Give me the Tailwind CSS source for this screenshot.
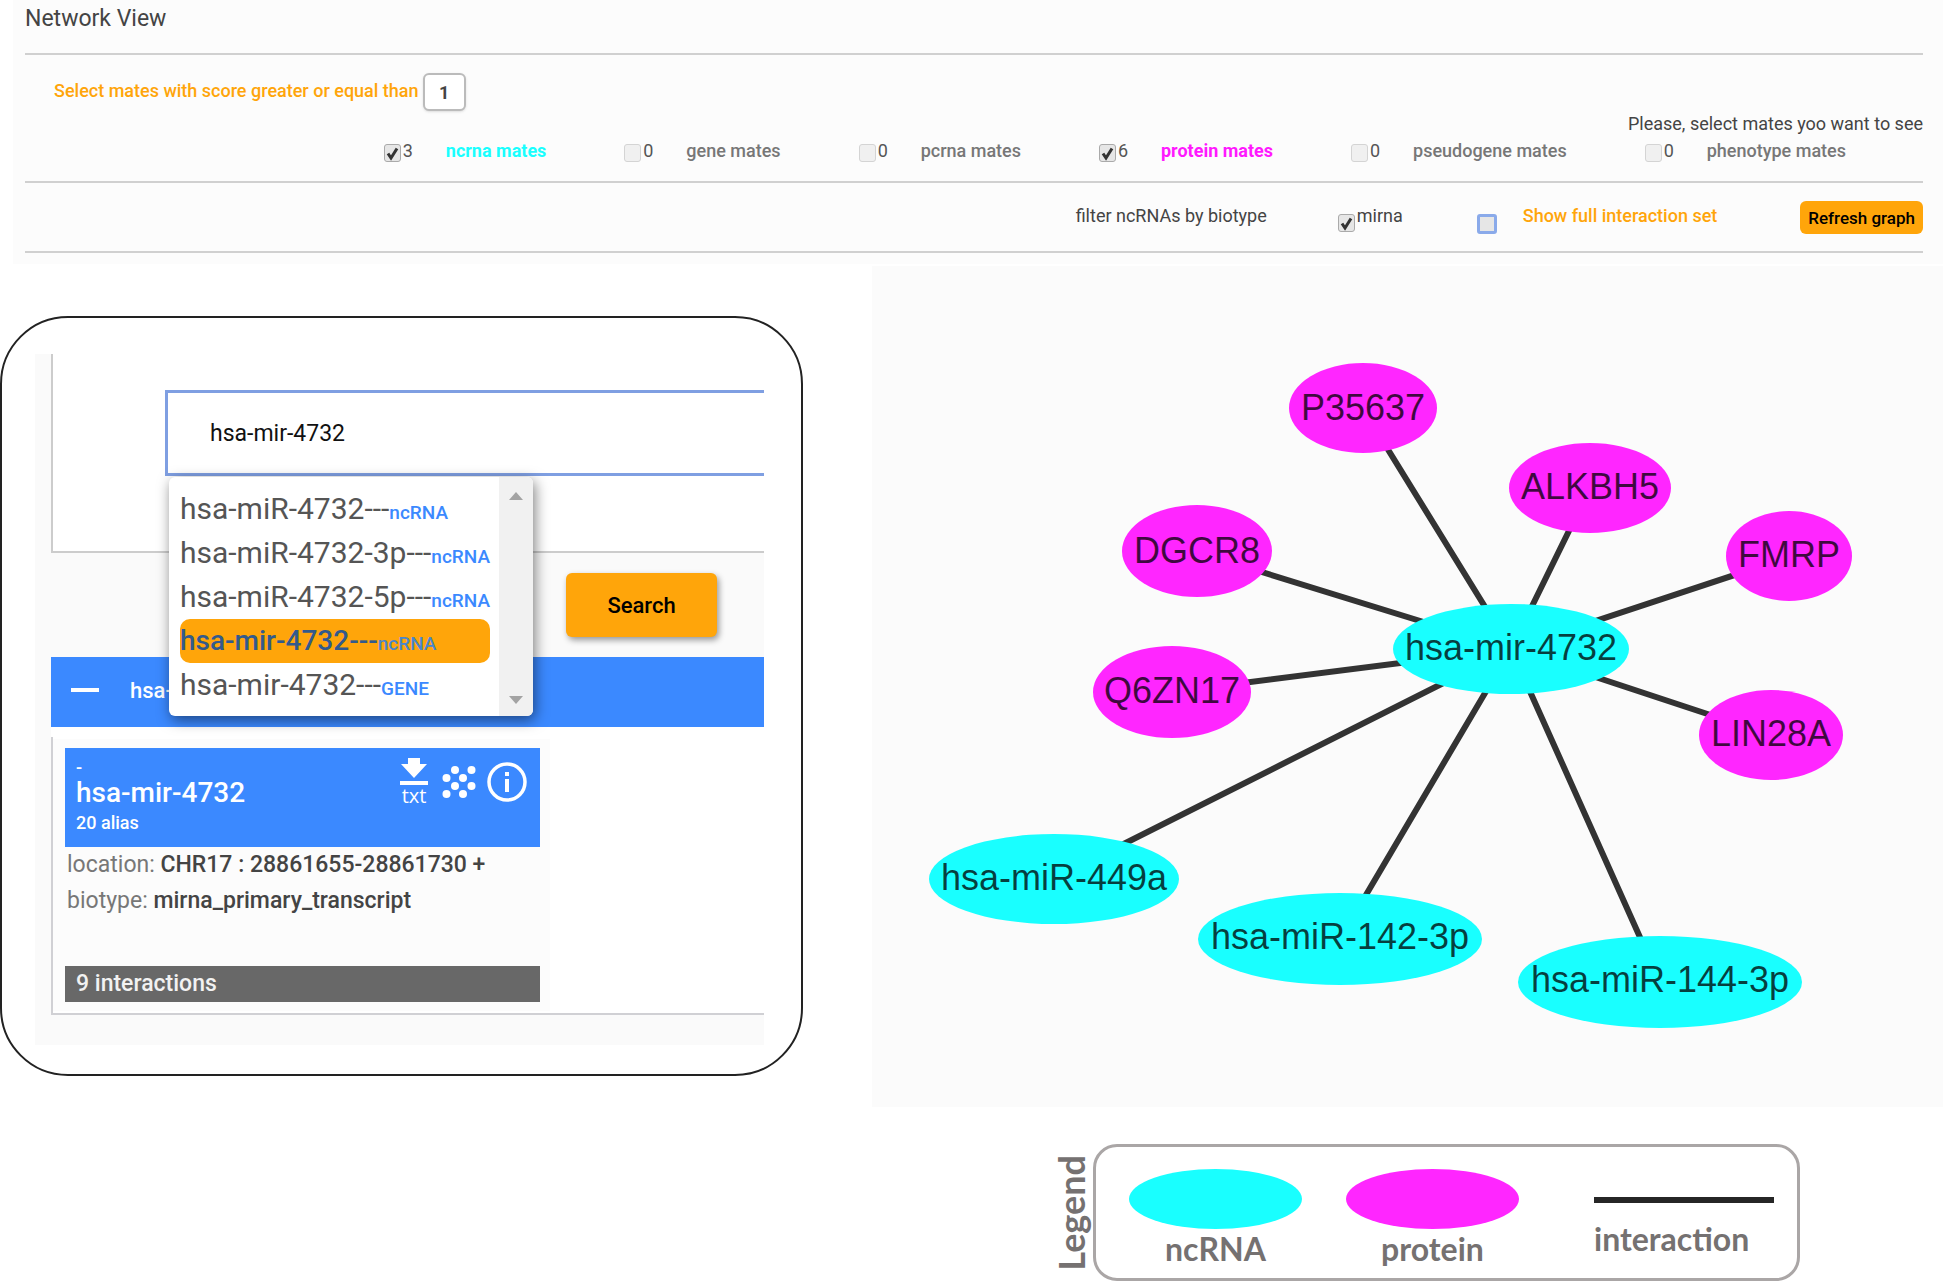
<!DOCTYPE html>
<html lang="en">
<head>
<meta charset="utf-8">
<title>Network View</title>
<script src="https://cdn.jsdelivr.net/npm/@tailwindcss/browser@4"></script>
</head>
<body class="bg-white font-['Roboto',sans-serif] text-[#444]">

<header class="ml-[13px] bg-[#fcfcfc] pl-3 pr-5 pb-[11px] text-lg leading-6">
  <h1 class="border-b-2 border-[#d0d0d0] pt-px pb-4 text-[23px] leading-9">Network View</h1>

  <form class="border-b-2 border-[#d0d0d0] pt-[18px] pb-[18px]">
    <div class="flex items-center gap-1 pb-px pl-[29px]">
      <label for="score" class="pb-[3px] font-medium text-[#ffa50a]">Select mates with score greater or equal than</label>
      <input id="score" type="text" value="1" class="h-[38px] w-[43px] rounded-md border-2 border-[#bbb] bg-white text-center font-bold shadow-sm">
    </div>
    <p class="text-right">Please, select mates yoo want to see</p>
    <div class="mt-[3px] flex items-start justify-end gap-[78px] pr-[77px] text-[#777]">
      <label class="flex items-start">
        <span class="mt-[5px] grid"><input type="checkbox" checked class="col-start-1 row-start-1 h-[18px] w-[17px] appearance-none rounded-[3px] border border-[#aaa] bg-[#e6e6e6]"><svg class="pointer-events-none col-start-1 row-start-1 h-[18px] w-[17px]" viewBox="0 0 17 18"><path d="M4 9.500l3 4.500 6-9.500" fill="none" stroke="#333" stroke-width="3"/></svg></span>
        <span class="ml-0.5 w-[43px] text-[#555]">3</span><span class="font-bold text-[#19ffff]">ncrna mates</span>
      </label>
      <label class="flex items-start">
        <input type="checkbox" class="mt-[5px] h-[18px] w-[17px] appearance-none rounded-[3px] border border-[#d4d4d4] bg-[#f0f0f0]">
        <span class="ml-0.5 w-[43px] text-[#555]">0</span><span class="font-medium">gene mates</span>
      </label>
      <label class="flex items-start">
        <input type="checkbox" class="mt-[5px] h-[18px] w-[17px] appearance-none rounded-[3px] border border-[#d4d4d4] bg-[#f0f0f0]">
        <span class="ml-0.5 w-[43px] text-[#555]">0</span><span class="font-medium">pcrna mates</span>
      </label>
      <label class="flex items-start">
        <span class="mt-[5px] grid"><input type="checkbox" checked class="col-start-1 row-start-1 h-[18px] w-[17px] appearance-none rounded-[3px] border border-[#aaa] bg-[#e6e6e6]"><svg class="pointer-events-none col-start-1 row-start-1 h-[18px] w-[17px]" viewBox="0 0 17 18"><path d="M4 9.500l3 4.500 6-9.500" fill="none" stroke="#333" stroke-width="3"/></svg></span>
        <span class="ml-0.5 w-[43px] text-[#555]">6</span><span class="font-bold text-[#ff19ff]">protein mates</span>
      </label>
      <label class="flex items-start">
        <input type="checkbox" class="mt-[5px] h-[18px] w-[17px] appearance-none rounded-[3px] border border-[#d4d4d4] bg-[#f0f0f0]">
        <span class="ml-0.5 w-[43px] text-[#555]">0</span><span class="font-medium">pseudogene mates</span>
      </label>
      <label class="flex items-start">
        <input type="checkbox" class="mt-[5px] h-[18px] w-[17px] appearance-none rounded-[3px] border border-[#d4d4d4] bg-[#f0f0f0]">
        <span class="ml-0.5 w-[43px] text-[#555]">0</span><span class="font-medium">phenotype mates</span>
      </label>
    </div>
  </form>

  <form class="flex items-start justify-end border-b-2 border-[#d0d0d0] pt-[18px] pb-[17px]">
    <p class="mt-[3px] mr-[71px]">filter ncRNAs by biotype</p>
    <label class="mt-[3px] mr-[74px] flex items-start">
      <span class="mt-2.5 grid"><input type="checkbox" checked class="col-start-1 row-start-1 h-[18px] w-[17px] appearance-none rounded-[3px] border border-[#aaa] bg-[#e6e6e6]"><svg class="pointer-events-none col-start-1 row-start-1 h-[18px] w-[17px]" viewBox="0 0 17 18"><path d="M4 9.500l3 4.500 6-9.500" fill="none" stroke="#333" stroke-width="3"/></svg></span>
      <span class="ml-0.5">mirna</span>
    </label>
    <label class="mt-[3px] mr-[83px] flex items-start gap-[26px]">
      <input type="checkbox" class="mt-2.5 h-5 w-5 appearance-none rounded-[3px] border-[3px] border-[#8aaaea] bg-[#e6e6e6]">
      <span class="font-medium text-[#ffa50a]">Show full interaction set</span>
    </label>
    <button type="button" class="h-[33px] rounded-md bg-[#ffa50a] px-2 text-[17px] font-medium text-black">Refresh graph</button>
  </form>
</header>

<main class="grid grid-cols-[803fr_69px_1071fr] items-start">
  <section class="mt-[52px] rounded-[68px] border-2 border-[#222] pt-9 pr-[37px] pb-[29px] pl-[33px]">
    <div class="bg-[#fafafa] pb-[30px] pl-4">
      <div class="border-b-2 border-l-2 border-[#ccc] bg-white pt-9 pb-[75px] pl-28">
        <div class="relative">
          <input type="text" value="hsa-mir-4732" aria-label="Search" class="block h-[86px] w-full border-3 border-r-0 border-[#7f9fe2] bg-white pl-[42px] text-[23px] text-[#111]">
          <div class="absolute top-[87px] left-1 z-10 flex w-[364px] overflow-hidden rounded-md bg-white shadow-[2px_4px_14px_rgba(0,0,0,0.5)]">
            <ul role="listbox" class="w-[330px] shrink-0 pt-2.5 pr-[9px] pb-[9px] pl-[11px] text-3xl leading-11 whitespace-nowrap text-[#555]">
              <li role="option">hsa-miR-4732---<span class="text-[19px] leading-none font-medium text-[#3b89ff]">ncRNA</span></li>
              <li role="option">hsa-miR-4732-3p---<span class="text-[19px] leading-none font-medium text-[#3b89ff]">ncRNA</span></li>
              <li role="option">hsa-miR-4732-5p---<span class="text-[19px] leading-none font-medium text-[#3b89ff]">ncRNA</span></li>
              <li role="option" aria-selected="true" class="rounded-[10px] bg-[#ffa50a] text-[28px] leading-11 font-medium text-[#335a8c]">hsa-mir-4732---<span class="text-[19px] leading-none text-[#4a86cc]">ncRNA</span></li>
              <li role="option">hsa-mir-4732---<span class="text-[19px] leading-none font-medium text-[#3b89ff]">GENE</span></li>
            </ul>
            <div class="flex w-[34px] flex-col items-center justify-between bg-[#f1f1f1] pt-[15px] pb-3">
              <svg class="h-2 w-3.5" viewBox="0 0 14 8"><path d="M0 8L7 0l7 8z" fill="#a3a3a3"/></svg>
              <svg class="h-2 w-3.5" viewBox="0 0 14 8"><path d="M0 0l7 8 7-8z" fill="#a3a3a3"/></svg>
            </div>
          </div>
        </div>
      </div>
      <div class="flex justify-end py-5 pr-[47px]">
        <button type="button" class="h-16 w-[151px] rounded-md bg-[#ffa50a] text-[22px] font-medium text-black shadow-[2px_3px_6px_rgba(0,0,0,0.4)]">Search</button>
      </div>
      <div class="flex h-[70px] items-center gap-[31px] bg-[#3b89ff] pb-1 pl-5 text-[22px] font-medium text-white">
        <span class="h-1 w-7 bg-white"></span>hsa-
      </div>
      <div class="h-2.5 bg-white"></div>
      <div class="border-b-2 border-l-2 border-[#d0d0d4] bg-white py-0.5">
        <article class="w-[497px] bg-[#fcfcfc] py-[9px] pr-2.5 pl-3 text-[23px] leading-9">
          <div class="flex justify-between bg-[#3b89ff] pt-2.5 pr-[13px] pb-[9px] pl-[11px] font-medium text-white">
            <div>
              <p class="text-lg leading-5">-</p>
              <h2 class="text-[28px] leading-[30px]">hsa-mir-4732</h2>
              <p class="text-lg leading-[30px]">20 alias</p>
            </div>
            <div class="flex items-start">
              <button type="button" aria-label="Download as text" class="mr-3.5">
                <svg class="h-[52px] w-7 overflow-visible" viewBox="0 0 28 52" fill="#fff"><path d="M8 0h12v6h7L14 20 1 6h7zM0 23h28v4H0z"/><text x="14" y="45" text-anchor="middle" font-family="Open Sans, sans-serif" font-size="20">txt</text></svg>
              </button>
              <button type="button" aria-label="Show network" class="mt-2 mr-[11px]">
                <svg class="h-8 w-[34px]" viewBox="0 0 34 32" fill="#fff"><circle cx="13" cy="4" r="4"/><circle cx="29.500" cy="4" r="4"/><circle cx="4.500" cy="12" r="4"/><circle cx="21" cy="12" r="4"/><circle cx="13" cy="20" r="4"/><circle cx="29.500" cy="20" r="4"/><circle cx="4.500" cy="28" r="4"/><circle cx="21" cy="28" r="4"/></svg>
              </button>
              <button type="button" aria-label="Information" class="mt-1">
                <svg class="size-10" viewBox="0 0 40 40" fill="#fff"><circle cx="20" cy="20" r="18" fill="none" stroke="#fff" stroke-width="3.500"/><path d="M18 10h4v4h-4zM18 17h4v13h-4z"/></svg>
              </button>
            </div>
          </div>
          <p class="pl-0.5 text-[#777]">location: <span class="font-medium text-[#444]">CHR17 : 28861655-28861730 +</span></p>
          <p class="pl-0.5 text-[#777]">biotype: <span class="font-medium text-[#444]">mirna_primary_transcript</span></p>
          <p class="mt-[47px] bg-[#686868] pl-[11px] font-medium text-[#f2f2f2]">9 interactions</p>
        </article>
      </div>
    </div>
  </section>

  <section aria-label="Interaction graph" class="col-start-3 mt-0.5 bg-[#fbfbfb]">
    <svg class="block w-full" viewBox="872 266 1071 841" font-family="Liberation Sans, Arial, sans-serif" font-size="36" text-anchor="middle">
      <g stroke="#333" stroke-width="6">
        <path d="M1511 649L1363 409M1511 649L1197 552M1511 649L1172 692M1511 649L1590 488M1511 649L1789 557M1511 649L1771 735M1511 649L1054 879M1511 649L1340 939M1511 649L1660 982"/>
      </g>
      <g fill="#ff26ff">
        <ellipse cx="1363" cy="408" rx="74" ry="45"/>
        <ellipse cx="1197" cy="551" rx="75" ry="46"/>
        <ellipse cx="1172" cy="692" rx="79" ry="46"/>
        <ellipse cx="1590" cy="488" rx="81" ry="45"/>
        <ellipse cx="1789" cy="556" rx="63" ry="45"/>
        <ellipse cx="1771" cy="735" rx="72" ry="45"/>
      </g>
      <g fill="#19ffff">
        <ellipse cx="1511" cy="649" rx="118" ry="45"/>
        <ellipse cx="1054" cy="879" rx="125" ry="45"/>
        <ellipse cx="1340" cy="939" rx="142" ry="46"/>
        <ellipse cx="1660" cy="982" rx="142" ry="46"/>
      </g>
      <g fill="#000" fill-opacity="0.75">
        <text x="1363" y="420">P35637</text>
        <text x="1197" y="563">DGCR8</text>
        <text x="1172" y="703">Q6ZN17</text>
        <text x="1590" y="499">ALKBH5</text>
        <text x="1789" y="567">FMRP</text>
        <text x="1771" y="746">LIN28A</text>
        <text x="1511" y="660">hsa-mir-4732</text>
        <text x="1054" y="890">hsa-miR-449a</text>
        <text x="1340" y="949">hsa-miR-142-3p</text>
        <text x="1660" y="992">hsa-miR-144-3p</text>
      </g>
    </svg>
  </section>
</main>

<footer class="mt-[37px] mr-[143px] flex items-center justify-end font-['Lato',sans-serif] text-[32px] font-bold text-[#757171]">
  <h2 class="rotate-180 text-4xl leading-11 [writing-mode:vertical-rl]">Legend</h2>
  <div class="flex h-[137px] w-[707px] items-start rounded-3xl border-3 border-[#aaa6a6] pt-[22px] pl-[33px] leading-10">
    <div class="mr-11 text-center">
      <div class="h-[60px] w-[173px] rounded-[50%] bg-[#19ffff]"></div>
      <p>ncRNA</p>
    </div>
    <div class="mr-[75px] text-center">
      <div class="h-[60px] w-[173px] rounded-[50%] bg-[#ff26ff]"></div>
      <p>protein</p>
    </div>
    <div>
      <div class="mt-7 h-1.5 w-[180px] bg-[#262626]"></div>
      <p class="mt-4">interaction</p>
    </div>
  </div>
</footer>
</body>
</html>
